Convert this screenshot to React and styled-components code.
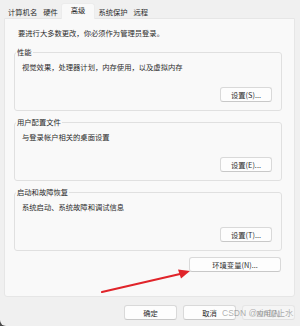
import React from 'react'
import styled, { createGlobalStyle } from 'styled-components'

const GlobalStyle = createGlobalStyle`
  html, body {
    margin: 0;
    padding: 0;
    background: #4a4a4a;
  }
  * {
    box-sizing: border-box;
  }
`;

const Window = styled.div`
  position: relative;
  width: 300px;
  height: 326px;
  overflow: hidden;
  background: #f0f0f0;
  border-bottom-left-radius: 6px;
  font-family: "Noto Sans CJK SC", "Noto Sans", sans-serif;
  font-size: 7.3px;
  line-height: 10px;
  color: #2b2b2b;
`;

const TabBar = styled.div`
  display: flex;
  align-items: flex-end;
  height: 18px;
  padding-left: 5px;
`;

const Tab = styled.div`
  position: relative;
  display: flex;
  align-items: center;
  height: ${p => (p.$active ? '16px' : '13px')};
  padding: ${p => (p.$active ? '0 9px 3px' : '0 3px')};
  margin-bottom: ${p => (p.$active ? '-1px' : '0')};
  background: ${p => (p.$active ? '#f9f9f9' : 'transparent')};
  border: ${p => (p.$active ? '1px solid #ececec' : 'none')};
  border-bottom: none;
  border-radius: 3px 3px 0 0;
  z-index: 1;
  white-space: nowrap;
`;

const Panel = styled.div`
  height: 279px;
  margin: 0 5px 0 4px;
  padding: 9px 0 0 0;
  background: #f9f9f9;
  border: 1px solid #e6e6e6;
  border-radius: 0 0 3px 3px;
`;

const Notice = styled.div`
  margin: 0 0 9px 13px;
  white-space: nowrap;
`;

const Group = styled.fieldset`
  margin: 0 12px 6px 9px;
  padding: 5px 9px 8px 7px;
  border: 1px solid #e0e0e0;
  border-radius: 3px;
  min-inline-size: 0;
`;

const Legend = styled.legend`
  margin-left: -6px;
  padding: 0 1px;
  line-height: 10px;
`;

const Description = styled.div`
  white-space: nowrap;
`;

const ButtonRow = styled.div`
  display: flex;
  justify-content: flex-end;
  margin-top: ${p => p.$top || '15px'};
  padding-right: ${p => p.$right || '0'};
`;

const Button = styled.div`
  display: flex;
  align-items: center;
  justify-content: center;
  width: ${p => p.$width || '52px'};
  height: 15px;
  background: ${p => (p.$disabled ? '#f5f5f5' : '#fdfdfd')};
  border: 1px solid ${p => (p.$disabled ? '#e6e6e6' : '#d9d9d9')};
  border-bottom-color: ${p => (p.$disabled ? '#e0e0e0' : '#c8c8c8')};
  border-radius: 3px;
  color: ${p => (p.$disabled ? '#a3a3a3' : '#2b2b2b')};
  white-space: nowrap;
`;

const Footer = styled.div`
  display: flex;
  justify-content: flex-end;
  gap: 6px;
  margin-top: 8px;
  padding-right: 5px;
`;

const Arrow = styled.svg`
  position: absolute;
  left: 0;
  top: 0;
  pointer-events: none;
`;

const Watermark = styled.div`
  position: absolute;
  left: 222px;
  top: 307px;
  font-family: "Liberation Sans", "Noto Sans CJK SC", sans-serif;
  font-size: 8.5px;
  line-height: 12px;
  color: rgba(110, 110, 110, 0.55);
  white-space: nowrap;
`;

const groups = [
  { title: '性能', text: '视觉效果，处理器计划，内存使用，以及虚拟内存', button: '设置(S)...' },
  { title: '用户配置文件', text: '与登录帐户相关的桌面设置', button: '设置(E)...' },
  { title: '启动和故障恢复', text: '系统启动、系统故障和调试信息', button: '设置(T)...' },
];

const tabs = ['计算机名', '硬件', '高级', '系统保护', '远程'];

const App = () => {
  return (
    <>
      <GlobalStyle />
      <Window>
        <TabBar>
          {tabs.map(t => (
            <Tab key={t} $active={t === '高级'}>{t}</Tab>
          ))}
        </TabBar>
        <Panel>
          <Notice>要进行大多数更改，你必须作为管理员登录。</Notice>
          {groups.map(g => (
            <Group key={g.title}>
              <Legend>{g.title}</Legend>
              <Description>{g.text}</Description>
              <ButtonRow>
                <Button>{g.button}</Button>
              </ButtonRow>
            </Group>
          ))}
          <ButtonRow $top="4px" $right="13px">
            <Button $width="92px">环境变量(N)...</Button>
          </ButtonRow>
        </Panel>
        <Footer>
          <Button $width="53px">确定</Button>
          <Button $width="53px">取消</Button>
          <Button $width="53px" $disabled>应用(A)</Button>
        </Footer>
        <Arrow width="300" height="326" viewBox="0 0 300 326">
          <line x1="102" y1="292" x2="180" y2="274" stroke="#e0242a" strokeWidth="2.2" strokeLinecap="round" />
          <polygon points="190,271 178,269.5 181,278.5" fill="#e0242a" />
        </Arrow>
        <Watermark>CSDN @xin加止水</Watermark>
      </Window>
    </>
  );
};

export default App;
